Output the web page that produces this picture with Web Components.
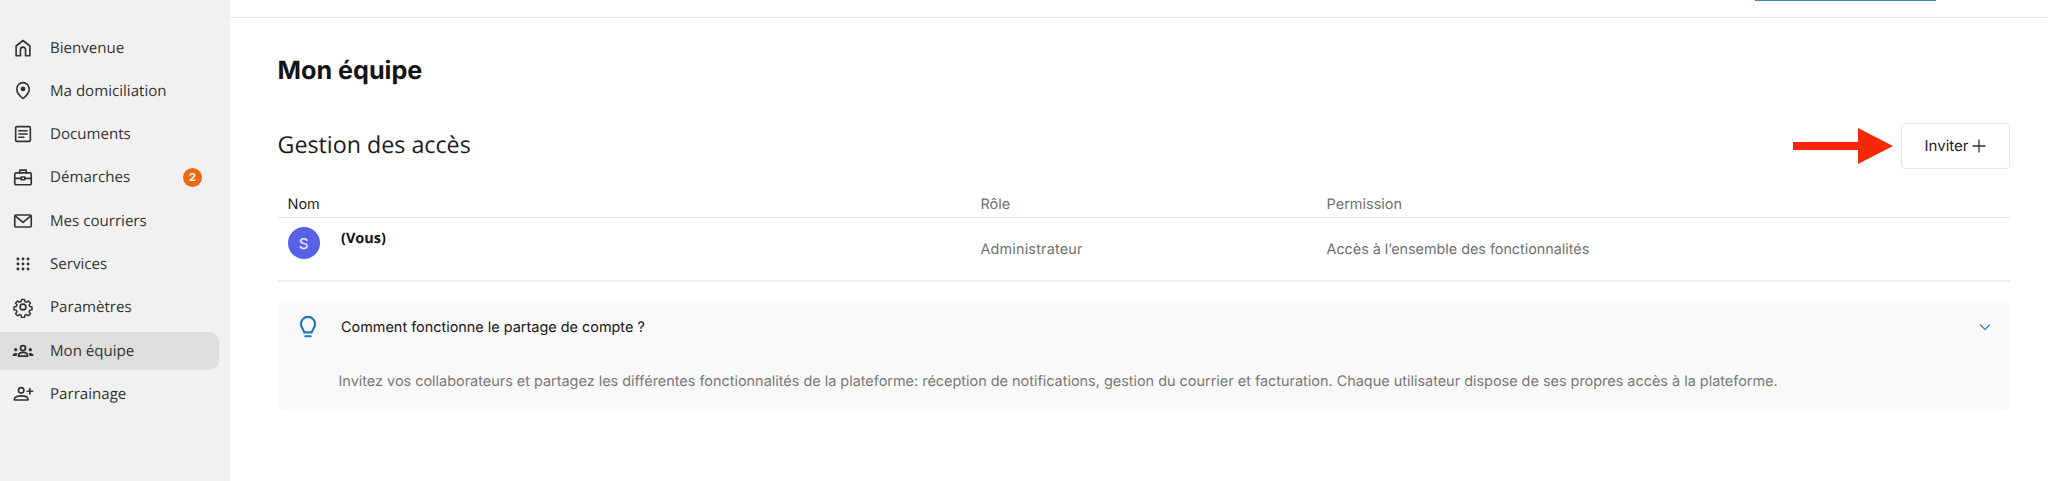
<!DOCTYPE html>
<html lang="fr">
<head>
<meta charset="utf-8">
<title>Mon équipe</title>
<style>
  html, body { margin: 0; height: 481px; overflow: hidden; background: #fff; }
  body { display: flex; font-family: "Inter", "Liberation Sans", sans-serif; text-rendering: geometricPrecision; }
</style>
</head>
<body>
<app-sidebar>
  <nav-item icon="home" label="Bienvenue"></nav-item>
  <nav-item icon="pin" label="Ma domiciliation"></nav-item>
  <nav-item icon="doc" label="Documents"></nav-item>
  <nav-item icon="case" label="Démarches" badge="2"></nav-item>
  <nav-item icon="mail" label="Mes courriers"></nav-item>
  <nav-item icon="grid" label="Services"></nav-item>
  <nav-item icon="gear" label="Paramètres"></nav-item>
  <nav-item icon="team" label="Mon équipe" active></nav-item>
  <nav-item icon="invite" label="Parrainage"></nav-item>
</app-sidebar>
<team-page></team-page>

<script>
const ICONS = {
  home: '<path d="M4.500 20.500V9.800L12 3.800l7.500 6v10.700h-4.700v-6.600a2.800 2.800 0 0 0-5.600 0v6.600z"/>',
  pin: '<path d="M12 20s-6.800-5-6.800-10.300a6.800 6.800 0 0 1 13.600 0C18.800 15 12 20 12 20z"/><circle cx="12" cy="9.700" r="1.700" fill="currentColor"/>',
  doc: '<rect x="4" y="4" width="16" height="16" rx="1.200"/><path d="M7.500 8.500h9M7.500 12h9M7.500 15.500h5.500"/>',
  case: '<rect x="3" y="7.500" width="18" height="13" rx="1.500"/><path d="M8.500 7.500V4.500h7v3M3 13.500h18"/><rect x="10" y="12" width="4" height="3" fill="#f1f1f1"/>',
  mail: '<rect x="3" y="5.500" width="18" height="13" rx="1.200"/><path d="M3.500 6.500l8.500 7 8.500-7"/>',
  grid: '<g fill="currentColor" stroke="none"><circle cx="6.500" cy="6.500" r="1.600"/><circle cx="12" cy="6.500" r="1.600"/><circle cx="17.500" cy="6.500" r="1.600"/><circle cx="6.500" cy="12" r="1.600"/><circle cx="12" cy="12" r="1.600"/><circle cx="17.500" cy="12" r="1.600"/><circle cx="6.500" cy="17.500" r="1.600"/><circle cx="12" cy="17.500" r="1.600"/><circle cx="17.500" cy="17.500" r="1.600"/></g>',
  gear: '<circle cx="12" cy="12" r="3.200"/><path d="M10.200 2.800h3.600l.5 2.700 1.900.8 2.300-1.600 2.500 2.500-1.600 2.300.8 1.900 2.700.5v3.600l-2.700.5-.8 1.900 1.600 2.300-2.500 2.500-2.300-1.600-1.900.8-.5 2.700h-3.600l-.5-2.700-1.900-.8-2.300 1.600-2.500-2.500 1.600-2.300-.8-1.900-2.700-.5v-3.600l2.700-.5.8-1.900-1.600-2.300 2.500-2.500 2.300 1.600 1.900-.8z" transform="translate(1.200 1.200) scale(.9)"/>',
  team: '<g fill="currentColor" stroke="none"><circle cx="4" cy="10.500" r="1.800"/><circle cx="20" cy="10.500" r="1.800"/><path d="M.5 17.500c0-2 1.500-3.300 3.800-3.300.6 0 1.100.1 1.500.2-.6.800-.8 1.800-.8 3.100zM23.500 17.500c0-2-1.500-3.300-3.800-3.300-.6 0-1.100.1-1.500.2.600.8.800 1.800.8 3.100z"/></g><circle cx="12" cy="8.800" r="2.700" stroke-width="2"/><path d="M7 17.500c0-2.600 2-4 5-4s5 1.400 5 4z" stroke-width="2"/>',
  invite: '<circle cx="10" cy="8" r="3"/><path d="M2.500 18.500v-.7c0-2.500 3.300-3.800 7.500-3.800s7.500 1.300 7.500 3.800v.7zM19.500 6v6M16.500 9h6"/>'
};

class AppSidebar extends HTMLElement {
  constructor() {
    super();
    this.attachShadow({ mode: 'open' }).innerHTML = `
      <style>
        :host {
          display: flex;
          flex-direction: column;
          flex: 0 0 230px;
          box-sizing: border-box;
          height: 481px;
          padding: 28.500px 11px 0 0;
          background: #f1f1f1;
        }
      </style>
      <slot></slot>
    `;
  }
}

class NavItem extends HTMLElement {
  constructor() {
    super();
    this.attachShadow({ mode: 'open' });
  }

  connectedCallback() {
    const badge = this.getAttribute('badge');
    this.shadowRoot.innerHTML = `
      <style>
        :host {
          display: flex;
          align-items: center;
          height: 38px;
          margin-bottom: 5.330px;
          padding-left: 11px;
          border-radius: 0 10px 10px 0;
          color: #333;
          font: 400 15.100px "Open Sans", "Liberation Sans", sans-serif;
        }
        :host([active]) { background: #dedede; }
        svg {
          flex: 0 0 24px;
          width: 22px;
          height: 22px;
          fill: none;
          stroke: currentColor;
          stroke-width: 1.800;
          stroke-linejoin: round;
          stroke-linecap: round;
        }
        .label { margin-left: 15px; }
        .badge {
          display: flex;
          align-items: center;
          justify-content: center;
          width: 19px;
          height: 19px;
          margin-left: auto;
          margin-right: 17px;
          border-radius: 50%;
          background: #ec6a13;
          color: #fff;
          font: 700 11px "Inter", "Liberation Sans", sans-serif;
        }
      </style>
      <svg viewBox="0 0 24 24">${ICONS[this.getAttribute('icon')]}</svg>
      <span class="label">${this.getAttribute('label')}</span>
      ${badge ? `<span class="badge">${badge}</span>` : ''}
    `;
  }
}

class TopBar extends HTMLElement {
  constructor() {
    super();
    this.attachShadow({ mode: 'open' }).innerHTML = `
      <style>
        :host {
          display: flex;
          justify-content: flex-end;
          box-sizing: border-box;
          height: 18px;
          padding-right: 112px;
          border-bottom: 1px solid #e4e6e8;
        }
        .tab { width: 181px; height: 1px; background: #3f86b8; }
      </style>
      <div class="tab"></div>
    `;
  }
}

class InviteButton extends HTMLElement {
  constructor() {
    super();
    this.attachShadow({ mode: 'open' }).innerHTML = `
      <style>
        :host {
          display: flex;
          align-items: center;
          justify-content: center;
          gap: 4px;
          box-sizing: border-box;
          width: 109px;
          height: 46px;
          padding-bottom: 2px;
          border: 1px solid #e6e6e6;
          border-radius: 4px;
          background: #fff;
          color: #222;
          font: 400 15px "Inter", "Liberation Sans", sans-serif;
        }
        svg { width: 14px; height: 14px; margin-top: 1px; stroke: #333; stroke-width: 1.300; }
      </style>
      <slot></slot>
      <svg viewBox="0 0 14 14"><path d="M7 0.500v13M0.500 7h13"/></svg>
    `;
  }
}

class AccessTable extends HTMLElement {
  constructor() {
    super();
    this.attachShadow({ mode: 'open' }).innerHTML = `
      <style>
        :host { display: block; font: 400 14.500px "Inter", "Liberation Sans", sans-serif; color: #6f6f6f; }
        .row {
          display: grid;
          grid-template-columns: 693px 346px 1fr;
          padding-left: 10px;
        }
        .head {
          align-items: center;
          height: 25px;
          border-bottom: 1px solid #e2e2e2;
          box-sizing: content-box;
        }
        .head .first { color: #222; }
        .body {
          height: 62px;
          border-bottom: 2px solid #eeeeee;
          align-items: start;
        }
        .who { display: flex; gap: 21.500px; padding-top: 9px; }
        .avatar {
          display: flex;
          align-items: center;
          justify-content: center;
          width: 32px;
          height: 32px;
          border-radius: 50%;
          background: #5661e6;
          color: #e8eaff;
          font-size: 15px;
          font-weight: 500;
        }
        .name { padding-top: 5px; color: #111; font: 700 14.500px/1 "Open Sans", "Liberation Sans", sans-serif; }
        .cell { padding-top: 23px; font-size: 14.350px; line-height: 17px; }
        .role { letter-spacing: .2px; }
      </style>
      <div class="row head">
        <span class="first">Nom</span><span>Rôle</span><span>Permission</span>
      </div>
      <div class="row body">
        <div class="who"><span class="avatar">S</span><span class="name">(Vous)</span></div>
        <span class="cell role">Administrateur</span>
        <span class="cell">Accès à l’ensemble des fonctionnalités</span>
      </div>
    `;
  }
}

class HelpCard extends HTMLElement {
  constructor() {
    super();
    this.attachShadow({ mode: 'open' }).innerHTML = `
      <style>
        :host {
          display: block;
          box-sizing: border-box;
          height: 108px;
          margin-top: 21px;
          border-radius: 6px;
          background: #f9f9f9;
          font: 400 14.430px "Inter", "Liberation Sans", sans-serif;
        }
        .top {
          display: flex;
          align-items: center;
          height: 48px;
          padding: 0 18px 0 17px;
          color: #151515;
        }
        .bulb { width: 26px; height: 26px; fill: none; stroke: #1c7ab5; stroke-width: 2; stroke-linecap: round; stroke-linejoin: round; }
        .title { margin-left: 20.500px; }
        .chev { margin-left: auto; width: 14px; height: 14px; fill: none; stroke: #3f86b8; stroke-width: 1.300; }
        p { margin: 22px 0 0 61px; color: #777; line-height: 17px; }
      </style>
      <div class="top">
        <svg class="bulb" viewBox="0 0 24 24">
          <path d="M8.500 17c0-2.200-3-3.800-3-7.800a6.500 6.500 0 0 1 13 0c0 4-3 5.600-3 7.800z"/>
          <path d="M9.500 20.500h5"/>
        </svg>
        <span class="title">Comment fonctionne le partage de compte ?</span>
        <svg class="chev" viewBox="0 0 14 14"><path d="M2 4.500l5 5 5-5"/></svg>
      </div>
      <p>Invitez vos collaborateurs et partagez les différentes fonctionnalités de la plateforme: réception de notifications, gestion du courrier et facturation. Chaque utilisateur dispose de ses propres accès à la plateforme.</p>
    `;
  }
}

class TeamPage extends HTMLElement {
  constructor() {
    super();
    this.attachShadow({ mode: 'open' }).innerHTML = `
      <style>
        :host { display: block; flex: 1; min-width: 0; }
        main { padding: 0 38px 0 47.500px; }
        h1 {
          margin: 0;
          padding-top: 38px;
          color: #141414;
          font: 700 25.200px/30px "Inter", "Liberation Sans", sans-serif;
        }
        .section {
          display: flex;
          align-items: center;
          height: 46px;
          margin-top: 37px;
          margin-bottom: 23px;
        }
        h2 {
          margin: 0 auto 0 0;
          padding-bottom: 2px;
          color: #1c1c1c;
          font: 400 23.250px/1 "Open Sans", "Liberation Sans", sans-serif;
        }
        .arrow { width: 100px; height: 36px; margin-right: 8px; }
      </style>
      <top-bar></top-bar>
      <main>
        <h1>Mon équipe</h1>
        <div class="section">
          <h2>Gestion des accès</h2>
          <svg class="arrow" viewBox="0 0 100 36"><path d="M0 14h65V0l35 18-35 18V22H0z" fill="#f5290a"/></svg>
          <invite-button>Inviter</invite-button>
        </div>
        <access-table></access-table>
        <help-card></help-card>
      </main>
    `;
  }
}

customElements.define('app-sidebar', AppSidebar);
customElements.define('nav-item', NavItem);
customElements.define('top-bar', TopBar);
customElements.define('invite-button', InviteButton);
customElements.define('access-table', AccessTable);
customElements.define('help-card', HelpCard);
customElements.define('team-page', TeamPage);
</script>
</body>
</html>
